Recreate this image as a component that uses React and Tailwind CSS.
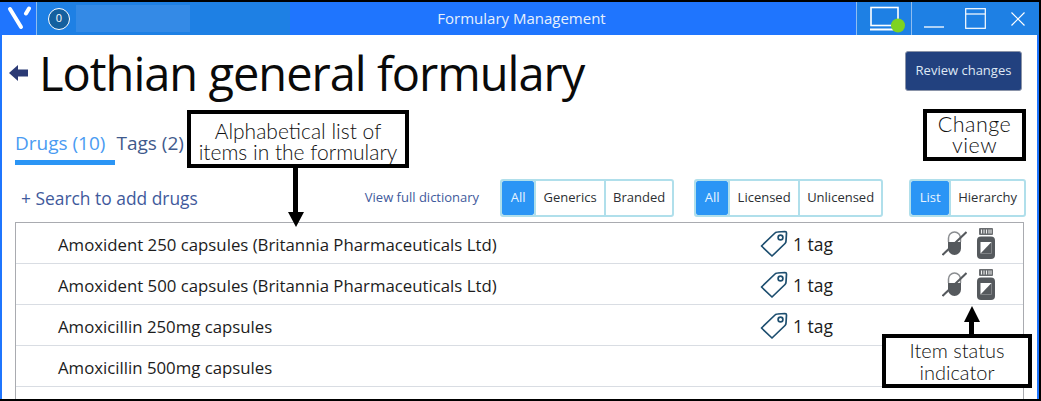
import React from "react";

const DRUGS = [
  { name: "Amoxident 250 capsules (Britannia Pharmaceuticals Ltd)", tag: true, status: true },
  { name: "Amoxident 500 capsules (Britannia Pharmaceuticals Ltd)", tag: true, status: true },
  { name: "Amoxicillin 250mg capsules", tag: true, status: false },
  { name: "Amoxicillin 500mg capsules", tag: false, status: false },
];

function TagIcon() {
  return (
    <svg width="28" height="27" viewBox="0 0 28 27" fill="none" stroke="#1d4e6f" strokeWidth="1.7" strokeLinejoin="round">
      <path d="M1.5 16 L15 3 Q16 2 17.5 2 L25 1.5 Q26.5 1.5 26.5 3 L26 11 Q26 12.5 25 13.5 L12 26 Z" />
      <circle cx="20.5" cy="7.5" r="2.4" />
    </svg>
  );
}

function CapsuleOffIcon() {
  return (
    <svg width="25" height="27" viewBox="0 0 25 27">
      <path d="M6.5 12 V8 A6 6 0 0 1 18.5 8 V12" fill="none" stroke="#8a8d90" strokeWidth="1.5" />
      <path d="M6 12 H19 V18.5 A6.5 6.5 0 0 1 6 18.5 Z" fill="#55595d" />
      <path d="M0.5 25 L24.5 2" stroke="#55595d" strokeWidth="2" />
    </svg>
  );
}

function BottleIcon() {
  return (
    <svg width="18" height="31" viewBox="0 0 18 31">
      <rect x="2" y="0" width="14" height="7" rx="1" fill="#6a6d70" />
      <path d="M4.5 1.5 V5.5 M7 1.5 V5.5 M9.5 1.5 V5.5 M12 1.5 V5.5 M14 1.5 V5.5" stroke="#fff" strokeWidth="0.9" />
      <rect x="0" y="8.5" width="18" height="22.5" rx="4" fill="#55595d" />
      <rect x="3.5" y="14" width="11" height="11.5" fill="#fff" />
      <path d="M3.5 25.5 L14.5 14 V25.5 Z" fill="#55595d" />
    </svg>
  );
}

function Segmented({ options }) {
  return (
    <div className="flex h-[38px] rounded-[3px] border-2 border-[#b0dfeb] bg-white">
      {options.map((option, index) => (
        <div
          key={option.label}
          className={`flex h-full items-center justify-center text-[13px] ${option.width} ${
            index === 0 ? "rounded-[2px] bg-[#2b95f5] text-[#e8f4ff]" : "border-l-2 border-[#b0dfeb] text-[#2c2f33]"
          } ${index === 1 ? "border-l-0" : ""}`}
        >
          {option.label}
        </div>
      ))}
    </div>
  );
}

function Callout({ className, children }) {
  return (
    <div
      className={`absolute flex flex-col items-center justify-center border-[4px] border-black bg-white text-center font-light text-[#111] [font-family:'Lato',sans-serif] ${className}`}
    >
      {children}
    </div>
  );
}

export default function App() {
  return (
    <div className="relative h-[401px] w-[1041px] overflow-hidden bg-black [font-family:'Open_Sans','Noto_Sans',sans-serif]">
      <div className="absolute inset-x-0 top-[2px] bottom-[2px] left-0 right-[2px] flex flex-col border-x-[2px] border-[#1f75fe] bg-white">
        {/* title bar */}
        <div className="-mx-[2px] flex h-[33px] shrink-0 items-stretch bg-[#1f75fe] text-white">
          <div className="flex w-[37px] items-center justify-center border-r border-[#8fbdf0]">
            <svg width="26" height="26" viewBox="0 0 26 26" fill="none" stroke="#fff" strokeLinecap="round">
              <path d="M5 3 L16 21" strokeWidth="4" />
              <path d="M24 2.5 L21 7.5" strokeWidth="4" />
            </svg>
          </div>
          <div className="flex w-[253px] items-center bg-[#1e80e4]">
            <div className="ml-[11px] flex h-[22px] w-[22px] items-center justify-center rounded-full border border-white bg-[#14609f] text-[11px]">
              0
            </div>
            <div className="ml-[6px] h-[27px] w-[114px] bg-[#348ae6]" />
          </div>
          <div className="flex flex-1 items-center justify-center text-[15px] text-[#e6f0fc]">
            <span className="-ml-[103px]">Formulary Management</span>
          </div>
          <div className="flex w-[183px] items-stretch bg-[#1e80e4]">
            <div className="flex w-[56px] items-center justify-center border-x border-[#8fbdf0]">
              <svg width="42" height="30" viewBox="0 0 42 30" fill="none" stroke="#fff" strokeWidth="1.6">
                <rect x="8" y="3.5" width="27" height="18" />
                <path d="M7 25.5 H33" strokeWidth="2" />
                <circle cx="35" cy="21.5" r="7" fill="#7ed321" stroke="none" />
              </svg>
            </div>
            <div className="flex flex-1 items-center">
              <svg className="ml-[12px]" width="20" height="24" viewBox="0 0 20 24" stroke="#fff" strokeWidth="1.3"><path d="M0 20 H20" /></svg>
              <svg className="ml-[21px]" width="21" height="21" viewBox="0 0 21 21" fill="none" stroke="#fff" strokeWidth="1.2"><rect x="0.7" y="0.7" width="19.6" height="19.6" /><path d="M1 6 H20" /></svg>
              <svg className="ml-[25px]" width="14" height="14" viewBox="0 0 14 14" stroke="#fff" strokeWidth="1.2"><path d="M0.5 0.5 L13.5 13.5 M13.5 0.5 L0.5 13.5" /></svg>
            </div>
          </div>
        </div>

        {/* heading */}
        <div className="flex h-[80px] shrink-0 items-start">
          <svg className="ml-[7px] mt-[29px]" width="19" height="18" viewBox="0 0 19 18" fill="#2b3a75"><path d="M0 9 L9 1 V5.5 H19 V12.5 H9 V17 Z" /></svg>
          <h1 className="ml-[11px] mt-[5px] text-[47px] leading-[66px] font-normal tracking-[-1px] text-[#0a0a0a]">Lothian general formulary</h1>
          <button type="button" className="mr-[15px] ml-auto mt-[16px] h-[40px] w-[117px] rounded-[3px] border border-[#8a93a8] bg-[#22417f] text-[13px] text-[#dfe8f5]">
            Review changes
          </button>
        </div>

        {/* tabs */}
        <div className="ml-[13px] flex h-[64px] shrink-0 items-start gap-[1px] pt-[12px] text-[19px] leading-[32px]">
          <div className="h-[38px] border-b-[5px] border-[#2b95f5] pr-[10px] text-[#4a9bf2]">Drugs (10)</div>
          <div className="text-[#3f5a8c]">Tags (2)</div>
        </div>

        {/* toolbar */}
        <div className="flex h-[38px] shrink-0 items-center">
          <div className="ml-[19px] text-[17.4px] text-[#3f5a9c]">+ Search to add drugs</div>
          <div className="ml-[167px] text-[13px] text-[#3f5a9c]">View full dictionary</div>
          <div className="ml-[21px]">
            <Segmented options={[{ label: "All", width: "w-[32px]" }, { label: "Generics", width: "w-[70px]" }, { label: "Branded", width: "w-[68px]" }]} />
          </div>
          <div className="ml-[20px]">
            <Segmented options={[{ label: "All", width: "w-[32px]" }, { label: "Licensed", width: "w-[70px]" }, { label: "Unlicensed", width: "w-[83px]" }]} />
          </div>
          <div className="ml-[26px]">
            <Segmented options={[{ label: "List", width: "w-[38px]" }, { label: "Hierarchy", width: "w-[75px]" }]} />
          </div>
        </div>

        {/* list */}
        <div className="mx-[13px] mt-[5px] flex-1 border-x border-t border-[#a9abb0]">
          {DRUGS.map((drug) => (
            <div key={drug.name} className="flex h-[41px] items-center border-b border-[#d9dde3] text-[16.8px] text-[#1c1c1c]">
              <div className="ml-[42px] w-[702px] pt-[3px]">{drug.name}</div>
              <div className="flex w-[120px] items-center gap-[5px]">
                {drug.tag ? <TagIcon /> : null}
                {drug.tag ? <span className="pt-[3px] text-[17.5px]">1 tag</span> : null}
              </div>
              {drug.status ? (
                <div className="ml-[62px] flex items-center gap-[10px]">
                  <CapsuleOffIcon />
                  <BottleIcon />
                </div>
              ) : null}
            </div>
          ))}
        </div>
      </div>

      {/* annotations */}
      <Callout className="left-[187px] top-[110px] h-[58px] w-[222px] pt-[3px] text-[21px] leading-[21px]">
        <span>Alphabetical list of</span>
        <span>items in the formulary</span>
      </Callout>
      <Callout className="left-[923px] top-[109px] h-[52px] w-[103px] text-[21.5px] leading-[21px] tracking-[0.5px]">
        <span>Change</span>
        <span>view</span>
      </Callout>
      <Callout className="left-[882px] top-[334px] h-[54px] w-[150px] text-[20px] leading-[22px]">
        <span>Item status</span>
        <span>indicator</span>
      </Callout>
      <div className="absolute left-[293px] top-[165px] h-[48px] w-[5px] bg-black" />
      <div className="absolute left-[288px] top-[212px] h-0 w-0 border-x-[8px] border-t-[15px] border-x-transparent border-t-black" />
      <div className="absolute left-[969px] top-[320px] h-[16px] w-[5px] bg-black" />
      <div className="absolute left-[964px] top-[306px] h-0 w-0 border-x-[8px] border-b-[16px] border-x-transparent border-b-black" />
    </div>
  );
}
